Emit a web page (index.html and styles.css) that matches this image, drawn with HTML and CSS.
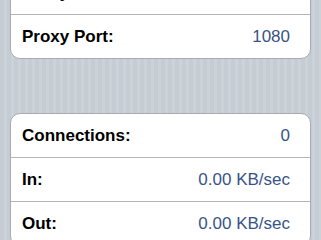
FILE: index.html
```html
<!DOCTYPE html>
<html>
<head>
<meta charset="utf-8">
<link rel="stylesheet" href="styles.css">
</head>
<body>
<div class="table">
  <div class="group group-first">
    <div class="row"><span class="label">Proxy Server:</span><span class="value">192.168.1.1</span></div>
    <div class="row"><span class="label">Proxy Port:</span><span class="value">1080</span></div>
  </div>
  <div class="group">
    <div class="row"><span class="label">Connections:</span><span class="value">0</span></div>
    <div class="row"><span class="label">In:</span><span class="value">0.00 KB/sec</span></div>
    <div class="row"><span class="label">Out:</span><span class="value">0.00 KB/sec</span></div>
  </div>
</div>
</body>
</html>
```
FILE: styles.css
```css
html, body {
  margin: 0;
  padding: 0;
  height: 100%;
  overflow: hidden;
}
body {
  background: repeating-linear-gradient(90deg, #c5ccd4 0, #c5ccd4 4px, #cbd2d8 4px, #cbd2d8 7px);
  font-family: "Liberation Sans", Arial, sans-serif;
}
.table {
  display: flex;
  flex-direction: column;
  gap: 54px;
  padding: 0 10px;
}
.group {
  background: #fff;
  border: 1px solid #a9abae;
  border-radius: 10px;
  display: flex;
  flex-direction: column;
}
.group-first {
  margin-top: -30px;
}
.row {
  height: 43px;
  display: flex;
  align-items: center;
  justify-content: space-between;
  padding: 0 20px 0 11px;
  border-bottom: 1px solid #b5b5b5;
}
.row:last-child {
  border-bottom: none;
}
.label {
  font-weight: bold;
  font-size: 17px;
  color: #000;
}
.value {
  font-size: 17px;
  color: #385487;
}
```
